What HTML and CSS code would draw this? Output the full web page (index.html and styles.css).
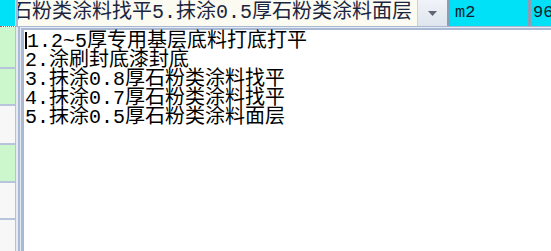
FILE: index.html
```html
<!DOCTYPE html>
<html lang="zh">
<head>
    <meta charset="UTF-8">
    <title>做法说明编辑</title>
    <link rel="stylesheet" href="styles.css">
</head>
<body>
    <div class="top">
        <div class="corner"></div>
        <div class="desc">
            <span>1.2~5厚专用基层底料打底打平2.涂刷封底漆封底3.抹涂0.8厚石粉类涂料找平4.抹涂0.7厚石粉类涂料找平5.抹涂0.5厚石粉类涂料面层</span>
        </div>
        <div class="dropdown">
            <svg width="9" height="5" viewBox="0 0 9 5"><path d="M0 0h9L4.5 5z" fill="#5e6676"/></svg>
        </div>
        <div class="cell unit">m2</div>
        <div class="cell qty">96</div>
    </div>
    <div class="bottom">
        <div class="rows">
            <div class="row green first"></div>
            <div class="row green r2"></div>
            <div class="row r3"></div>
            <div class="row green r4"></div>
            <div class="row r5"></div>
            <div class="row last"></div>
        </div>
        <div class="frame">
            <div class="frame-in">
                <div class="memo">
                    <div class="line"><span class="caret"></span>1.2~5厚专用基层底料打底打平</div>
                    <div class="line">2.涂刷封底漆封底</div>
                    <div class="line">3.抹涂0.8厚石粉类涂料找平</div>
                    <div class="line">4.抹涂0.7厚石粉类涂料找平</div>
                    <div class="line">5.抹涂0.5厚石粉类涂料面层</div>
                </div>
            </div>
        </div>
    </div>
</body>
</html>
```

FILE: styles.css
```css
body {
    margin: 0;
    width: 551px;
    height: 251px;
    overflow: hidden;
    background: #fff;
    font-family: "Liberation Mono", "Noto Sans CJK SC", monospace;
}
.top {
    display: flex;
    height: 26px;
}
.corner {
    width: 15px;
    flex: none;
    background: #00e1f8;
    border-right: 1px solid #d6dfec;
}
.desc {
    flex: none;
    width: 394px;
    min-width: 0;
    display: flex;
    justify-content: flex-end;
    align-items: center;
    overflow: hidden;
    white-space: nowrap;
    background: #fbfbf2;
    border-left: 2px solid #a9b9d4;
    padding-right: 5px;
    font-size: 20px;
    line-height: 26px;
    color: #1c2540;
}
.desc span {
    flex: none;
}
.dropdown {
    flex: none;
    width: 29px;
    display: flex;
    align-items: center;
    justify-content: center;
    background: linear-gradient(#f0f3f8, #dfe5ee);
    border-left: 1px solid #c9d2df;
}
.cell {
    background: #00e1f8;
    font-size: 17px;
    line-height: 26px;
    padding-left: 5px;
    color: #10202c;
}
.unit {
    flex: none;
    width: 73px;
    border-left: 3px solid #8e9db6;
    border-right: 3px solid #8e9db6;
}
.qty {
    flex: 1;
    padding-left: 2px;
}
.bottom {
    display: flex;
    height: 225px;
}
.rows {
    width: 15px;
    flex: none;
    border-right: 1px solid #b3c1d9;
    border-top: 1px dotted #e0443c;
}
.row {
    background: #f7f7f7;
    border-bottom: 2px solid #b7c4dc;
}
.green {
    background: #ccf7cc;
}
.first { height: 40px; }
.r2 { height: 35px; }
.r3 { height: 37px; }
.r4 { height: 36px; }
.r5 { height: 35px; }
.last { border-bottom: none; height: 40px; }
.frame {
    flex: 1;
    background: #e6ebf3;
    padding-left: 2px;
    border-top: 1px solid #a9b9d4;
}
.frame-in {
    height: 100%;
    border-left: 2px solid #a9b9d4;
    padding-left: 1px;
    padding-top: 1px;
    background: #e6ebf3;
}
.memo {
    height: 100%;
    background: #fff;
    border-left: 3px solid #a9b9d4;
    border-top: 2px solid #a9b9d4;
    padding: 2px 0 0 1px;
    font-size: 20px;
    line-height: 19px;
    color: #000;
}
.caret {
    display: inline-block;
    width: 0;
    height: 17px;
    border-left: 2px solid #000;
    vertical-align: -2px;
}
```
